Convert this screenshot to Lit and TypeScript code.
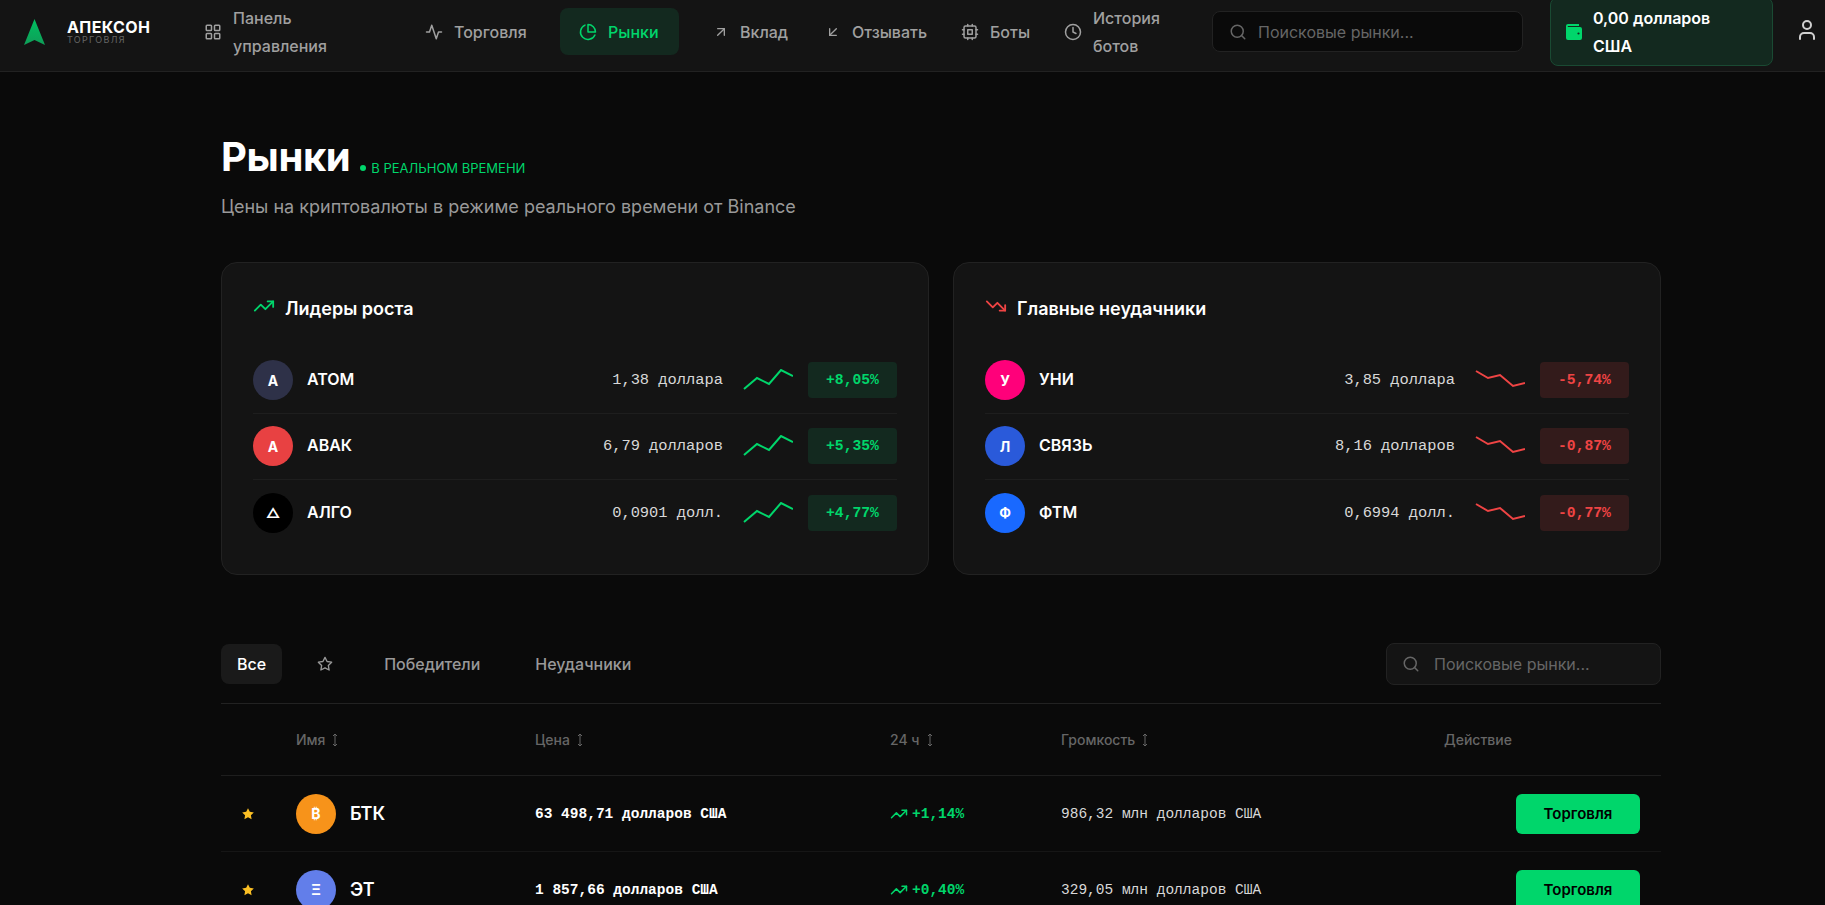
import { LitElement, html, css, svg } from "lit";
import { customElement } from "lit/decorators.js";

const icon = (body: unknown, size = 18, cls = "") => html`<svg class=${cls} width=${size} height=${size} viewBox="0 0 24 24" fill="none" stroke="currentColor" stroke-width="2" stroke-linecap="round" stroke-linejoin="round">${body}</svg>`;

const I = {
  grid: svg`<rect x="3" y="3" width="7" height="7" rx="1"/><rect x="14" y="3" width="7" height="7" rx="1"/><rect x="14" y="14" width="7" height="7" rx="1"/><rect x="3" y="14" width="7" height="7" rx="1"/>`,
  activity: svg`<path d="M22 12h-4l-3 9L9 3l-3 9H2"/>`,
  pie: svg`<path d="M21.2 15.9A10 10 0 1 1 8 2.8"/><path d="M22 12A10 10 0 0 0 12 2v10z"/>`,
  upRight: svg`<path d="M7 17 17 7"/><path d="M7 7h10v10"/>`,
  downLeft: svg`<path d="M17 7 7 17"/><path d="M17 17H7V7"/>`,
  cpu: svg`<rect x="4" y="4" width="16" height="16" rx="2"/><rect x="9" y="9" width="6" height="6"/><path d="M15 2v2M15 20v2M2 15h2M2 9h2M20 15h2M20 9h2M9 2v2M9 20v2"/>`,
  clock: svg`<circle cx="12" cy="12" r="10"/><path d="M12 6v6l4 2"/>`,
  search: svg`<circle cx="11" cy="11" r="8"/><path d="m21 21-4.3-4.3"/>`,
  user: svg`<circle cx="12" cy="7" r="4"/><path d="M19 21v-2a4 4 0 0 0-4-4H9a4 4 0 0 0-4 4v2"/>`,
  up: svg`<path d="m22 7-8.5 8.5-5-5L2 17"/><path d="M16 7h6v6"/>`,
  down: svg`<path d="m22 17-8.5-8.5-5 5L2 7"/><path d="M16 17h6v-6"/>`,
  star: svg`<path d="M12 2l3.09 6.26L22 9.27l-5 4.87 1.18 6.88L12 17.77l-6.18 3.25L7 14.14 2 9.27l6.91-1.01L12 2z"/>`,
};

type Mover = { g: string; c: string; n: string; p: string; d: string };
const gainers: Mover[] = [
  { g: "A", c: "#2e3148", n: "АТОМ", p: "1,38 доллара", d: "+8,05%" },
  { g: "A", c: "#e84142", n: "АВАК", p: "6,79 долларов", d: "+5,35%" },
  { g: "△", c: "#000000", n: "АЛГО", p: "0,0901 долл.", d: "+4,77%" },
];
const losers: Mover[] = [
  { g: "У", c: "#ff007a", n: "УНИ", p: "3,85 доллара", d: "-5,74%" },
  { g: "Л", c: "#2a5ada", n: "СВЯЗЬ", p: "8,16 долларов", d: "-0,87%" },
  { g: "Ф", c: "#1969ff", n: "ФТМ", p: "0,6994 долл.", d: "-0,77%" },
];
const rows = [
  { g: "₿", c: "#f7931a", n: "БТК", p: "63 498,71 долларов США", d: "+1,14%", v: "986,32 млн долларов США" },
  { g: "Ξ", c: "#627eea", n: "ЭТ", p: "1 857,66 долларов США", d: "+0,40%", v: "329,05 млн долларов США" },
  { g: "Т", c: "#26a17b", n: "ТОН", p: "5,42 доллара США", d: "+0,12%", v: "120,18 млн долларов США" },
];

@customElement("app-root")
export class AppRoot extends LitElement {
  static styles = css`
    :host { display: block; width: 1825px; height: 905px; overflow: hidden; background: #0a0a0a; color: #fff; font-family: Inter, "Noto Sans", sans-serif; }
    * { box-sizing: border-box; }
    .frame { width: 1882px; }
    header { height: 72px; padding-bottom: 8px; background: #141414; border-bottom: 1px solid #222; display: flex; align-items: center; }
    .brand { width: 184px; padding-left: 24px; display: flex; align-items: center; gap: 22px; flex: none; }
    .brand-text { display: flex; flex-direction: column; }
    .brand-name { font-size: 16px; font-weight: 700; line-height: 16px; letter-spacing: .4px; }
    .brand-sub { font-size: 9px; line-height: 9px; letter-spacing: 1.3px; color: #666; margin-top: 0; }
    nav { width: 998px; flex: none; display: grid; grid-template-columns: 221px 155px 133px 112px 136px 103px 138px; align-items: center; }
    .item { display: flex; align-items: center; gap: 11px; padding-left: 20px; color: #a0a0a0; font-size: 16px; font-weight: 500; line-height: 28px; }
    .item svg { flex: none; }
    .item.active { background: #13291f; color: #00d66b; width: 119px; height: 47px; border-radius: 8px; padding-left: 19px; }
    .item.wrap1 span { width: 110px; }
    .item.wrap2 span { width: 80px; }
    .search { display: flex; align-items: center; gap: 11px; border: 1px solid #222; border-radius: 8px; color: #666; font-size: 16px; }
    .search.top { width: 311px; height: 41px; margin-left: 30px; padding-left: 16px; background: #0a0a0a; flex: none; }
    .wallet { margin-left: 27px; width: 223px; height: 69px; flex: none; display: flex; align-items: center; gap: 11px; padding-left: 15px; background: #13291f; border: 1px solid #1a4a33; border-radius: 8px; font-size: 16px; font-weight: 600; line-height: 28px; }
    .wallet span { width: 140px; }
    .user { margin-left: 22px; color: #d0d0d0; flex: none; }

    main { width: 1440px; margin: 0 auto; padding-top: 57px; }
    .title-row { display: flex; align-items: baseline; gap: 10px; }
    h1 { margin: 0; font-size: 40px; line-height: 56px; font-weight: 700; letter-spacing: -.4px; }
    .live { display: flex; align-items: center; gap: 5px; font-size: 13px; color: #00d66b; }
    .live i { width: 6px; height: 6px; border-radius: 50%; background: #00d66b; }
    .sub { margin: 8px 0 0; font-size: 18px; line-height: 28px; color: #999; }
    .cards { display: grid; grid-template-columns: 1fr 1fr; gap: 24px; margin-top: 41px; }
    .card { height: 313px; background: #141414; border: 1px solid #222; border-radius: 16px; padding: 31px; }
    h2 { margin: 0 0 26px; height: 28px; display: flex; align-items: center; gap: 10px; font-size: 18px; font-weight: 600; }
    .green { color: #00d66b; }
    .red { color: #ef4444; }
    .mrow { display: flex; align-items: center; height: 66px; padding-bottom: 1px; border-bottom: 1px solid #1e1e1e; }
    .mrow:last-child { border-bottom: 0; }
    .av { width: 40px; height: 40px; border-radius: 50%; flex: none; display: flex; align-items: center; justify-content: center; font-size: 14px; font-weight: 700; color: #fff; }
    .mname { margin-left: 14px; font-size: 16px; font-weight: 600; flex: 1; margin-top: -2px; }
    .mono { font-family: "Liberation Mono", "DejaVu Sans Mono", monospace; }
    .mprice { font-size: 15.4px; color: #d8d8d8; }
    .spark { margin-left: 20px; flex: none; }
    .pct { margin-left: 15px; width: 89px; height: 36px; border-radius: 4px; display: flex; align-items: center; justify-content: center; font-size: 14.7px; font-weight: 700; }
    .pct.g { background: #13291f; color: #00d66b; }
    .pct.r { background: #331b1b; color: #ef4444; }

    .tabs { display: flex; align-items: center; height: 59px; margin-top: 69px; padding-bottom: 1px; border-bottom: 1px solid #222; height: 60px; }
    .tab { height: 40px; margin-top: -18px; padding: 0 16px; display: flex; align-items: center; border-radius: 8px; color: #999; font-size: 16px; font-weight: 500; }
    .tab.on { background: #1a1a1a; color: #fff; margin-right: 19px; }
    .tab.fav { margin-right: 19px; }
    .tab.win { margin-right: 23px; }
    .search.small { margin-left: auto; margin-top: -18px; width: 275px; height: 42px; padding-left: 15px; background: #141414; gap: 14px; }
    .grid { display: grid; grid-template-columns: 75px 239px 355px 171px 383px 217px; align-items: center; }
    .thead { height: 72px; border-bottom: 1px solid #1e1e1e; color: #666; font-size: 14px; font-weight: 500; }
    .th { display: flex; align-items: center; gap: 6px; }
    .tr { height: 76px; border-bottom: 1px solid #161616; }
    .fav-star { margin-left: 20px; color: #fbbf24; display: flex; }
    .name { display: flex; align-items: center; gap: 14px; font-size: 18px; font-weight: 600; }
    .tprice { font-size: 14.5px; font-weight: 700; }
    .change { display: flex; align-items: center; gap: 4px; color: #00d66b; font-size: 14.5px; font-weight: 700; }
    .vol { font-size: 14.5px; color: #d8d8d8; }
    .btn { width: 124px; height: 40px; margin-left: 72px; border: 0; border-radius: 6px; background: #00d66b; color: #000; font: 600 15px Inter, sans-serif; }
  `;

  private mover(m: Mover, gain: boolean) {
    const pts = gain ? "1,20 14,9 26,15 38,1 50,7" : "1,2 13,9 25,6 38,17 50,14";
    return html`<div class="mrow">
      <div class="av" style="background:${m.c}">${m.g}</div>
      <div class="mname">${m.n}</div>
      <div class="mprice mono">${m.p}</div>
      <svg class="spark ${gain ? "green" : "red"}" width="50" height="22" viewBox="0 0 50 22" fill="none" stroke="currentColor" stroke-width="2"><polyline points=${pts}/></svg>
      <div class="pct mono ${gain ? "g" : "r"}">${m.d}</div>
    </div>`;
  }

  private sort() {
    return html`<svg width="8" height="14" viewBox="0 0 8 14" fill="none" stroke="currentColor" stroke-width="1"><path d="M4 1v12M2 3l2-2 2 2M2 11l2 2 2-2"/></svg>`;
  }

  render() {
    return html`<div class="frame">
      <header>
        <div class="brand">
          <svg width="21" height="26" viewBox="0 0 21 26"><defs><linearGradient id="lg" x1="0" y1="0" x2="0" y2="1"><stop offset="0" stop-color="#00c060"/><stop offset="1" stop-color="#0f9d58"/></linearGradient></defs><path d="M10.5 0 21 26l-10.5-5L0 26z" fill="url(#lg)"/></svg>
          <div class="brand-text"><div class="brand-name">АПЕКСОН</div><div class="brand-sub">ТОРГОВЛЯ</div></div>
        </div>
        <nav>
          <div class="item wrap1">${icon(I.grid)}<span>Панель управления</span></div>
          <div class="item">${icon(I.activity)}<span>Торговля</span></div>
          <div class="item active">${icon(I.pie)}<span>Рынки</span></div>
          <div class="item">${icon(I.upRight, 16)}<span>Вклад</span></div>
          <div class="item">${icon(I.downLeft, 16)}<span>Отзывать</span></div>
          <div class="item">${icon(I.cpu)}<span>Боты</span></div>
          <div class="item wrap2">${icon(I.clock)}<span>История ботов</span></div>
        </nav>
        <div class="search top">${icon(I.search, 18)}<span>Поисковые рынки...</span></div>
        <div class="wallet">
          <svg width="16" height="16" viewBox="0 0 16 16"><path d="M2 0h11v2H2a.6.6 0 0 0 0 1h12a2 2 0 0 1 2 2v9a2 2 0 0 1-2 2H2a2 2 0 0 1-2-2V2a2 2 0 0 1 2-2z" fill="#00d66b"/><circle cx="12.5" cy="9.5" r="1.1" fill="#13291f"/></svg>
          <span>0,00 долларов США</span>
        </div>
        <div class="user">${icon(I.user, 24)}</div>
      </header>
      <main>
        <div class="title-row"><h1>Рынки</h1><div class="live"><i></i>В РЕАЛЬНОМ ВРЕМЕНИ</div></div>
        <p class="sub">Цены на криптовалюты в режиме реального времени от Binance</p>
        <div class="cards">
          <section class="card">
            <h2><span class="green">${icon(I.up, 22)}</span>Лидеры роста</h2>
            ${gainers.map((m) => this.mover(m, true))}
          </section>
          <section class="card">
            <h2><span class="red">${icon(I.down, 22)}</span>Главные неудачники</h2>
            ${losers.map((m) => this.mover(m, false))}
          </section>
        </div>
        <div class="tabs">
          <div class="tab on">Все</div>
          <div class="tab fav">${icon(I.star, 16)}</div>
          <div class="tab win">Победители</div>
          <div class="tab">Неудачники</div>
          <div class="search small">${icon(I.search, 18)}<span>Поисковые рынки...</span></div>
        </div>
        <div class="grid thead">
          <div></div>
          <div class="th">Имя ${this.sort()}</div>
          <div class="th">Цена ${this.sort()}</div>
          <div class="th">24 ч ${this.sort()}</div>
          <div class="th">Громкость ${this.sort()}</div>
          <div class="th">Действие</div>
        </div>
        ${rows.map((r) => html`<div class="grid tr">
          <div class="fav-star"><svg width="14" height="14" viewBox="0 0 24 24" fill="currentColor"><path d="M12 2l3.09 6.26L22 9.27l-5 4.87 1.18 6.88L12 17.77l-6.18 3.25L7 14.14 2 9.27l6.91-1.01L12 2z"/></svg></div>
          <div class="name"><div class="av" style="background:${r.c}">${r.g}</div>${r.n}</div>
          <div class="tprice mono">${r.p}</div>
          <div class="change mono">${icon(I.up, 18)}${r.d}</div>
          <div class="vol mono">${r.v}</div>
          <div><button class="btn">Торговля</button></div>
        </div>`)}
      </main>
    </div>`;
  }
}
